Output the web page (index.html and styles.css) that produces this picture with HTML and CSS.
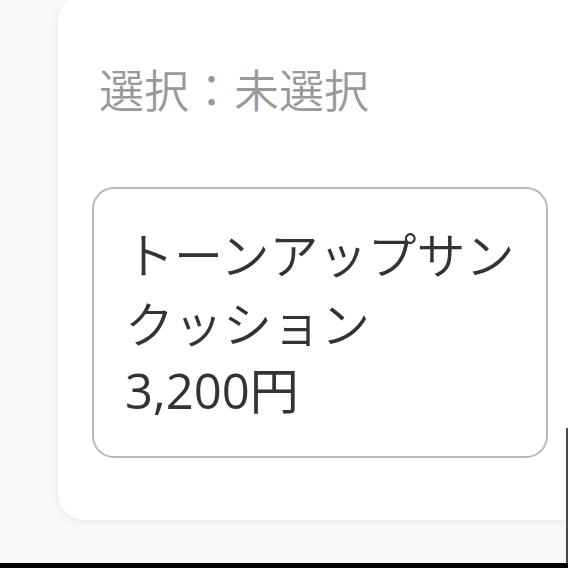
FILE: index.html
```html
<!DOCTYPE html>
<html lang="ja">
<head>
<meta charset="utf-8">
<title>選択</title>
<link rel="stylesheet" href="styles.css">
</head>
<body>
<div class="stage">
  <section class="card">
    <p class="label">選択：未選択</p>
    <div class="option">
      <span class="name">トーンアップサンクッション</span>
      <span class="price">3,200円</span>
    </div>
  </section>
  <div class="edge"></div>
</div>
<div class="footer"></div>
</body>
</html>
```

FILE: styles.css
```css
html, body {
  margin: 0;
  padding: 0;
}
body {
  width: 568px;
  height: 568px;
  overflow: hidden;
  background: #f9f9f9;
  display: flex;
  flex-direction: column;
  font-family: "Noto Sans CJK JP", "Noto Sans", sans-serif;
}
.stage {
  flex: 1;
  position: relative;
  overflow: hidden;
  padding-left: 58px;
}
.card {
  margin-top: -4px;
  width: 560px;
  height: 524px;
  box-sizing: border-box;
  background: #ffffff;
  border-radius: 26px;
  box-shadow: 0 2px 10px rgba(0, 0, 0, 0.07);
  padding: 63px 0 0 34px;
}
.label {
  margin: 0;
  padding-left: 7px;
  font-size: 45px;
  font-weight: 350;
  line-height: 60px;
  color: #999999;
}
.option {
  margin-top: 68px;
  width: 456px;
  box-sizing: border-box;
  border: 2px solid #b8b8b8;
  border-radius: 22px;
  padding: 29px 18px 31px 31px;
  font-family: "Open Sans", "Noto Sans CJK JP", sans-serif;
  font-size: 49px;
  font-weight: 350;
  line-height: 69px;
  color: #333333;
}
.name {
  display: block;
  font-family: "Noto Sans CJK JP", sans-serif;
}
.price {
  display: block;
  font-weight: 400;
}
.edge {
  position: absolute;
  right: 0;
  top: 428px;
  bottom: 0;
  width: 2px;
  background: #4a4a4a;
}
.footer {
  height: 5px;
  background: #000000;
}
```
